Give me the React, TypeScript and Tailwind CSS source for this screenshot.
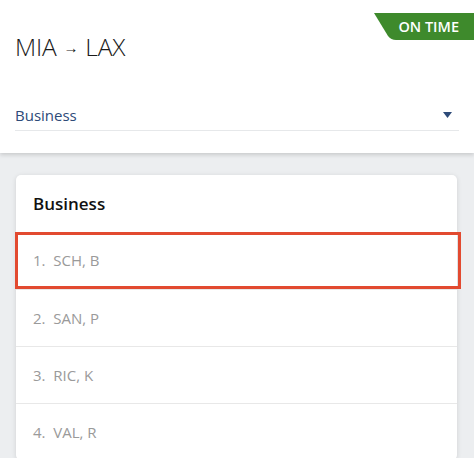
export default function App() {
  const passengers = ['1.  SCH, B', '2.  SAN, P', '3.  RIC, K', '4.  VAL, R'];

  return (
    <div className="w-[474px] h-[458px] overflow-hidden bg-[#eceef0] font-['Open_Sans',sans-serif]">
      {/* Flight header */}
      <div className="relative bg-white h-[153px] px-[15px] pt-[30px] shadow-[0_2px_4px_rgba(0,0,0,0.15)]">
        <div className="absolute top-[13px] right-0 h-[27px] w-[100px] flex items-center justify-end pr-[15px]">
          <svg className="absolute inset-0" width="100" height="27" viewBox="0 0 100 27">
            <path d="M0 0 H100 V27 H22 Q17 27 14 23 Z" fill="#3e8a2c" />
          </svg>
          <span className="relative text-white text-[14.5px] font-semibold">ON TIME</span>
        </div>

        <h1 className="text-[24.5px] font-light text-[#1a1a1a] leading-[34px] flex items-center gap-[7px] tracking-[-0.2px]">
          <span>MIA</span>
          <span className="text-[15px]">→</span>
          <span>LAX</span>
        </h1>

        <div className="mt-[36px] h-[31px] flex items-center justify-between border-b border-[#e6e8ea]">
          <span className="text-[15px] text-[#2d4a78]">Business</span>
          <svg width="9" height="6" viewBox="0 0 9 6" className="mr-[7px]">
            <path d="M0 0 H9 L4.5 6 Z" fill="#2d4a78" />
          </svg>
        </div>
      </div>

      {/* Passenger list */}
      <div className="mt-[22px] mx-[16px] w-[441px] bg-white rounded-[5px] shadow-[0_1px_5px_rgba(0,0,0,0.12)]">
        <div className="h-[57px] flex items-center px-[17px] text-[17px] font-semibold text-[#111]">
          Business
        </div>
        {passengers.map((p, i) => (
          <div
            key={p}
            className={`relative h-[57px] flex items-center px-[17px] text-[15px] text-[#9a9a9a] whitespace-pre ${
              i > 0 ? 'border-t border-[#e8e8e8]' : ''
            }`}
          >
            {p}
            {i === 0 && (
              <div className="absolute top-0 bottom-0 -left-[1px] -right-[4px] border-[3px] border-[#e24a30]" />
            )}
          </div>
        ))}
      </div>
    </div>
  );
}
